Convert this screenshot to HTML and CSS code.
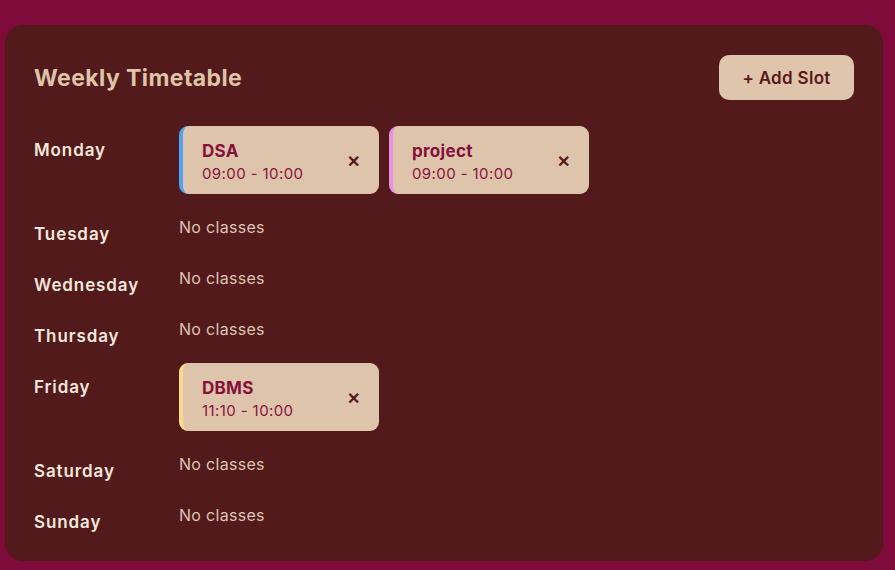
FILE: index.html
```html
<!DOCTYPE html>
<html lang="en">
<head>
  <meta charset="UTF-8" />
  <meta name="viewport" content="width=device-width, initial-scale=1.0">
  <title>Weekly Timetable</title>
  <link rel="stylesheet" href="styles.css">
</head>
<body>

  <div class="timetable">
    <div class="timetable-header">
      <h2>Weekly Timetable</h2>
      <button class="add-button">+ Add Slot</button>
    </div>

    <div class="day-row">
      <div class="day-name">Monday</div>
      <div class="slots">
        <div class="slot slot-blue">
          <div class="slot-info">
            <div class="slot-title">DSA</div>
            <div class="slot-time">09:00 - 10:00</div>
          </div>
          <span class="slot-remove">&#x2715;</span>
        </div>
        <div class="slot slot-pink">
          <div class="slot-info">
            <div class="slot-title">project</div>
            <div class="slot-time">09:00 - 10:00</div>
          </div>
          <span class="slot-remove">&#x2715;</span>
        </div>
      </div>
    </div>

    <div class="day-row">
      <div class="day-name">Tuesday</div>
      <div class="empty">No classes</div>
    </div>

    <div class="day-row">
      <div class="day-name">Wednesday</div>
      <div class="empty">No classes</div>
    </div>

    <div class="day-row">
      <div class="day-name">Thursday</div>
      <div class="empty">No classes</div>
    </div>

    <div class="day-row">
      <div class="day-name">Friday</div>
      <div class="slots">
        <div class="slot slot-yellow">
          <div class="slot-info">
            <div class="slot-title">DBMS</div>
            <div class="slot-time">11:10 - 10:00</div>
          </div>
          <span class="slot-remove">&#x2715;</span>
        </div>
      </div>
    </div>

    <div class="day-row">
      <div class="day-name">Saturday</div>
      <div class="empty">No classes</div>
    </div>

    <div class="day-row">
      <div class="day-name">Sunday</div>
      <div class="empty">No classes</div>
    </div>
  </div>

</body>
</html>
```

FILE: styles.css
```css
body {
  background: #7f0b3a;
  font-family: 'Inter', 'Noto Sans', sans-serif;
  margin: 0;
  padding: 25px 12px 8px 5px;
}

.timetable {
  background: #521a1b;
  border-radius: 18px;
  padding: 30px 29px 28px 29px;
}

.timetable-header {
  display: flex;
  justify-content: space-between;
  align-items: center;
  margin-bottom: 26px;
}

.timetable-header h2 {
  margin: 0;
  color: #dfc4a9;
  font-size: 23px;
  font-weight: 700;
  letter-spacing: 0.4px;
}

.add-button {
  background: #dec5ab;
  color: #5a181c;
  border: none;
  border-radius: 10px;
  height: 45px;
  width: 135px;
  font-family: inherit;
  font-size: 17px;
  font-weight: 600;
  letter-spacing: 0.3px;
  cursor: pointer;
}

.day-row {
  display: flex;
  align-items: flex-start;
  margin-bottom: 16px;
}

.day-row:last-child {
  margin-bottom: 0;
}

.day-name {
  width: 145px;
  flex-shrink: 0;
  padding-top: 13px;
  line-height: 22px;
  font-size: 17px;
  font-weight: 600;
  color: #f6e7da;
  letter-spacing: 0.9px;
}

.empty {
  padding-top: 5px;
  line-height: 24px;
  font-size: 16px;
  color: #dcc5b2;
  letter-spacing: 0.3px;
}

.slots {
  display: flex;
  gap: 10px;
}

.slot {
  width: 200px;
  height: 68px;
  box-sizing: border-box;
  background: #dec4aa;
  border-radius: 9px;
  border-left: 4px solid #4ea5f5;
  padding: 2px 19px 0 19px;
  display: flex;
  align-items: center;
  justify-content: space-between;
}

.slot-pink {
  border-left-color: #ee8fe6;
}

.slot-yellow {
  border-left-color: #fed98d;
}

.slot-title {
  color: #84103b;
  font-size: 17px;
  font-weight: 700;
  line-height: 24px;
  letter-spacing: 0.3px;
}

.slot-time {
  color: #8a1340;
  font-size: 15px;
  line-height: 21px;
  letter-spacing: 0.4px;
}

.slot-remove {
  color: #5a181c;
  font-size: 16px;
  font-weight: 700;
  cursor: pointer;
}
```
